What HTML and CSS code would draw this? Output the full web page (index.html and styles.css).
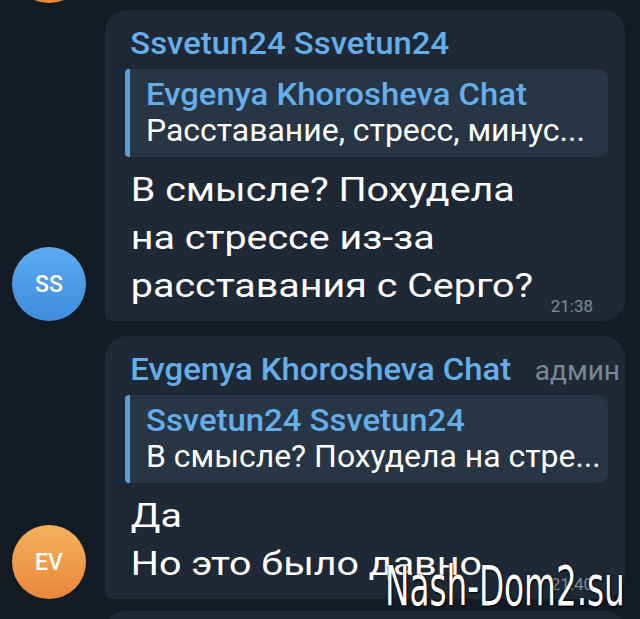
FILE: index.html
```html
<!DOCTYPE html>
<html lang="ru">
<head>
  <meta charset="UTF-8">
  <meta name="viewport" content="width=device-width, initial-scale=1.0">
  <title>Chat</title>
  <link rel="stylesheet" href="styles.css">
</head>
<body>
  <div class="chat">
    <!-- previous avatar peeking from the top -->
    <div class="row prev">
      <div class="avatar orange"></div>
    </div>

    <!-- Message 1 -->
    <div class="row">
      <div class="avatar blue">SS</div>
      <div class="bubble">
        <div class="name">Ssvetun24 Ssvetun24</div>
        <div class="reply">
          <div class="reply-name">Evgenya Khorosheva Chat</div>
          <div class="reply-text">Расставание, стресс, минус...</div>
        </div>
        <div class="text">В смысле? Похудела<br>на стрессе из-за<br>расставания с Серго?</div>
        <span class="time">21:38</span>
      </div>
    </div>

    <!-- Message 2 -->
    <div class="row">
      <div class="avatar orange">EV</div>
      <div class="bubble">
        <div class="name-line">
          <span class="name">Evgenya Khorosheva Chat</span>
          <span class="role">админ</span>
        </div>
        <div class="reply">
          <div class="reply-name">Ssvetun24 Ssvetun24</div>
          <div class="reply-text">В смысле? Похудела на стре...</div>
        </div>
        <div class="text">Да<br>Но это было давно</div>
        <span class="time">21:40</span>
      </div>
    </div>

    <!-- next bubble peeking from the bottom -->
    <div class="row next">
      <div class="bubble stub"></div>
    </div>
  </div>

  <div class="watermark">Nash-Dom2.su</div>
</body>
</html>
```

FILE: styles.css
```css
/* Reset */
* {
  margin: 0;
  padding: 0;
  box-sizing: border-box;
}

body {
  font-family: 'Roboto', 'Noto Sans', sans-serif;
  background: #131b25;
  color: #fff;
  width: 640px;
  height: 619px;
  overflow: hidden;
  position: relative;
}

/* Chat feed */
.chat {
  display: flex;
  flex-direction: column;
  gap: 15px;
  padding: 0 15px 0 12px;
}

.row {
  display: flex;
  align-items: flex-end;
  gap: 19px;
}

.prev {
  margin-top: -71px;
  margin-bottom: -8px;
}

.next {
  margin-top: -3px;
}

/* Avatars */
.avatar {
  flex: 0 0 74px;
  width: 74px;
  height: 74px;
  border-radius: 50%;
  display: flex;
  align-items: center;
  justify-content: center;
  font-size: 23px;
  font-weight: 500;
  color: #fff;
}

.avatar.blue {
  background: linear-gradient(180deg, #5cabf0, #3f8cdb);
}

.avatar.orange {
  background: linear-gradient(180deg, #f5b25c, #e8873a);
}

/* Bubbles */
.bubble {
  flex: 1;
  position: relative;
  background: #1f2935;
  border-radius: 22px 22px 22px 6px;
  padding: 17px 5px 12px 20px;
}

.bubble.stub {
  margin-left: 93px;
  height: 40px;
  border-radius: 22px;
}

.name,
.reply-name {
  transform: scaleX(1.06);
  transform-origin: left center;
}

.reply-text {
  transform: scaleX(1.03);
  transform-origin: left center;
}

.name {
  color: #64aeea;
  font-size: 31px;
  font-weight: 500;
  line-height: 34px;
  padding-left: 5px;
}

.name-line {
  display: flex;
  align-items: baseline;
  justify-content: space-between;
}

.role {
  color: #7b8794;
  font-size: 28px;
}

/* Reply preview */
.reply {
  margin: 8px 12px 8px 0;
  background: #283545;
  border-left: 5px solid #5a9fdb;
  border-radius: 4px 10px 10px 4px;
  padding: 8px 12px 8px 16px;
}

.reply-name {
  color: #64aeea;
  font-size: 31px;
  font-weight: 500;
  line-height: 36px;
}

.reply-text {
  font-size: 31px;
  line-height: 36px;
  white-space: nowrap;
}

/* Body text */
.text {
  font-size: 34px;
  line-height: 48px;
  padding-left: 5px;
  transform: scaleX(1.16);
  transform-origin: left center;
}

.time {
  position: absolute;
  right: 32px;
  bottom: 5px;
  color: #7d8a97;
  font-size: 17px;
}

/* Watermark */
.watermark {
  position: absolute;
  left: 385px;
  top: 559px;
  font-family: 'DejaVu Sans Condensed', 'DejaVu Sans', sans-serif;
  font-size: 55px;
  line-height: 1;
  white-space: nowrap;
  color: #fff;
  transform: scaleX(0.66);
  transform-origin: left top;
  text-shadow: 0 0 2px #000, 1px 1px 2px #000;
}
```
